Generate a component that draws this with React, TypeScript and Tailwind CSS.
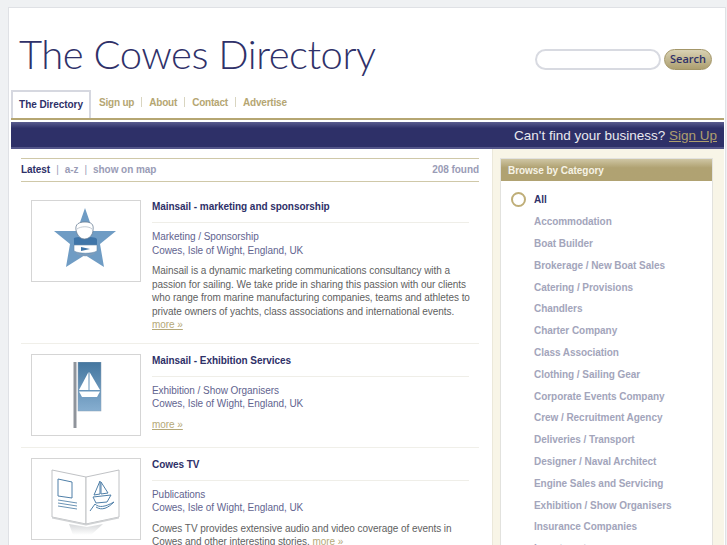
const categories = [
  'Accommodation',
  'Boat Builder',
  'Brokerage / New Boat Sales',
  'Catering / Provisions',
  'Chandlers',
  'Charter Company',
  'Class Association',
  'Clothing / Sailing Gear',
  'Corporate Events Company',
  'Crew / Recruitment Agency',
  'Deliveries / Transport',
  'Designer / Naval Architect',
  'Engine Sales and Servicing',
  'Exhibition / Show Organisers',
  'Insurance Companies',
  'Investment',
]

function StarLogo() {
  return (
    <svg width="62" height="60" viewBox="0 0 62 60" className="mb-[6px] mr-[2px]">
      <path d="M31 0 L39 23 L62 23 L46 36 L50 59 L31 47 L12 59 L16 36 L0 23 L23 23 Z" fill="#6f9cc4" />
      <path d="M20 32 C19 29 22 29 30 29 C39 29 43 29 43 32 L43 37 L20 37 Z" fill="#3f75a8" />
      <path d="M22 22 C21 16 25 14 31 14 C37 14 40 16 39 22 C39 27 35 31 30.500 31 C26 31 23 27 22 22 Z" fill="#fff" stroke="#6a7f95" strokeWidth="0.8" />
      <path d="M23 21 C27 18 35 18 38 21" fill="none" stroke="#b4bcc6" strokeWidth="0.8" />
      <path d="M20 37 L43 37 L43 43 C38 46 25 46 20 43 Z" fill="#fff" stroke="#6a89a8" strokeWidth="0.6" />
      <path d="M27 39 L36 41 L27 43 Z" fill="#3f75a8" />
      <path d="M21 44 C26 47 37 47 42 44 C40 49 24 50 21 44 Z" fill="#7f9dbb" />
    </svg>
  )
}

function FlagLogo() {
  return (
    <svg width="29" height="66" viewBox="0 0 29 66" className="ml-[3px]">
      <defs>
        <linearGradient id="flag" x1="0" y1="0" x2="0" y2="1">
          <stop offset="0" stopColor="#44769f" />
          <stop offset="1" stopColor="#86aed0" />
        </linearGradient>
      </defs>
      <rect x="0.500" y="0" width="3" height="66" fill="#8f949b" />
      <rect x="5" y="0" width="23" height="49" fill="url(#flag)" stroke="#8aa0b4" strokeWidth="0.5" />
      <path d="M15.500 10 L15.500 28 L6 28 Z" fill="#fff" />
      <path d="M16.500 10 L27 28 L16.500 28 Z" fill="#fff" />
      <path d="M6 29.500 L27 29.500 L24 35 L9 35 Z" fill="#fff" />
    </svg>
  )
}

function BrochureLogo() {
  return (
    <svg width="72" height="66" viewBox="0 0 72 66" className="ml-[2px] mt-[6px]">
      <defs>
        <linearGradient id="shade" x1="0" y1="0" x2="0" y2="1">
          <stop offset="0" stopColor="#d6d8da" />
          <stop offset="1" stopColor="#ffffff" />
        </linearGradient>
      </defs>
      <path d="M18 55 L36 58 L52 55 L40 66 L22 66 Z" fill="url(#shade)" />
      <path d="M1 1 L35 8 L35 55 L1 48 Z" fill="#fff" stroke="#c0c2c5" strokeWidth="1" />
      <path d="M35 8 L68 1 L68 48 L35 55 Z" fill="#fff" stroke="#c0c2c5" strokeWidth="1" />
      <path d="M1 48 L35 55 L68 48 L68 49.500 L35 56.500 L1 49.500 Z" fill="#cfd1d3" />
      <path d="M7 10 L21 13 L21 29 L7 27 Z" fill="none" stroke="#4f7fa8" strokeWidth="1" />
      <path d="M7 31 L26 34 M7 34 L26 37 M7 37 L26 40" stroke="#6a93b5" strokeWidth="1" />
      <path d="M49 12 L49 25 L43 26 Z M50 13 L57 24 L50 25 Z M42 28 L60 26 L56 33 L45 34 Z" fill="none" stroke="#4f7fa8" strokeWidth="1" />
      <path d="M39 42 L44 35 C48 39 54 38 63 33 C57 39 51 42 45 38" fill="none" stroke="#4f7fa8" strokeWidth="1" />
    </svg>
  )
}

function Listing({
  logo,
  title,
  category,
  description,
  more,
}: {
  logo: React.ReactNode
  title: string
  category: string
  description?: React.ReactNode
  more?: boolean
}) {
  return (
    <div className="flex border-b border-[#f0efe9] pb-[11px] pl-[10px] pt-[10px]">
      <div className="flex h-[82px] w-[110px] shrink-0 items-center justify-center border border-[#d5d5d5]">{logo}</div>
      <div className="ml-[11px] w-[317px]">
        <h3 className="border-b border-[#efeee8] pb-[9px] text-[10px] font-bold leading-[13px] text-[#2e3068]">{title}</h3>
        <p className="mt-[7px] leading-[13.500px] text-[#62648f]">
          {category}
          <br />
          Cowes, Isle of Wight, England, UK
        </p>
        {description && <p className="-mr-[3px] mt-[7px] leading-[13.500px] text-[#5f5f5f]">{description}</p>}
        {more && (
          <p className="mt-[7px] leading-[13.500px]">
            <a className="text-[#b5a878] underline">more »</a>
          </p>
        )}
      </div>
    </div>
  )
}

export default function App() {
  return (
    <div className="h-[545px] w-[727px] overflow-hidden bg-[#eff1f3] pl-[8px] pt-[7px] text-[10px] tracking-[-0.05px] [font-family:'Liberation_Sans',Arial,sans-serif]">
      <div className="h-[600px] w-[718px] border border-[#dfe1e5] bg-white pl-[2px]">
        {/* Header */}
        <div className="flex h-[82px] items-end justify-between">
          <h1 className="mb-[8px] ml-[8px] text-[40px] font-light leading-[56px] tracking-[-0.5px] text-[#2f3169] [font-family:Lato,sans-serif]">The Cowes Directory</h1>
          <div className="mb-[20px] mr-[13px] flex items-center gap-[3px]">
            <input className="h-[21px] w-[126px] rounded-full border-2 border-[#d8dae1] bg-white" />
            <button className="h-[21px] w-[48px] rounded-full border border-[#a39668] bg-gradient-to-b from-[#d9d2b4] to-[#ad9f70] text-[11px] tracking-normal text-[#2e3068] [font-family:'Open_Sans',sans-serif] font-semibold">Search</button>
          </div>
        </div>

        {/* Nav */}
        <nav className="mr-px flex h-[30px] items-end border-b-[2px] border-[#b5a672]">
          <a className="flex h-[28px] w-[80px] items-center justify-center border-x-2 border-t-2 border-[#d6d8e0] pb-px font-bold text-[#2e3068]">The Directory</a>
          <div className="mb-[5px] ml-[8px] flex h-[22px] items-center font-bold tracking-[-0.2px] text-[#b5a672]">
            <a>Sign up</a>
            <span className="mx-[7px] h-[10px] w-px bg-[#d9d5c0]" />
            <a>About</a>
            <span className="mx-[7px] h-[10px] w-px bg-[#d9d5c0]" />
            <a>Contact</a>
            <span className="mx-[7px] h-[10px] w-px bg-[#d9d5c0]" />
            <a>Advertise</a>
          </div>
        </nav>

        {/* Banner */}
        <div className="mr-px mt-[2px] flex h-[27px] items-center justify-end border-b-2 border-b-[#54568a] bg-gradient-to-b from-[#5a5c8e] from-0% to-[#2e3068] to-25% pr-[7px] pt-[3px] text-[13.500px] tracking-normal text-[#e9e9ef]">
          Can't find your business?&nbsp;<a className="text-[#ae9f6e] underline">Sign Up</a>
        </div>

        <div className="mr-px flex">
          {/* Results */}
          <div className="w-[481px] pl-[10px] pr-[13px] pt-[9px]">
            <div className="mb-[8px] flex h-[24px] items-center justify-between border-y border-[#cfc8a8] pb-[2px] font-bold text-[#9a9cb6]">
              <div className="flex items-center">
                <span className="text-[#2e3068]">Latest</span>
                <span className="mx-[6px] font-normal">|</span>
                <a>a-z</a>
                <span className="mx-[6px] font-normal">|</span>
                <a>show on map</a>
              </div>
              <span>208 found</span>
            </div>
            <Listing
              logo={<StarLogo />}
              title="Mainsail - marketing and sponsorship"
              category="Marketing / Sponsorship"
              description={
                <>
                  Mainsail is a dynamic marketing communications consultancy with a passion for sailing. We take pride in sharing this passion with our clients who range from marine manufacturing companies, teams and athletes to private owners of yachts, class associations and international events.{' '}
                  <a className="text-[#b5a878] underline">more »</a>
                </>
              }
            />
            <Listing logo={<FlagLogo />} title="Mainsail - Exhibition Services" category="Exhibition / Show Organisers" more />
            <Listing
              logo={<BrochureLogo />}
              title="Cowes TV"
              category="Publications"
              description={
                <>
                  Cowes TV provides extensive audio and video coverage of events in Cowes and other interesting stories. <a className="text-[#b5a878] underline">more »</a>
                </>
              }
            />
          </div>

          {/* Sidebar */}
          <aside className="flex-1 border-l border-[#ebe8da] bg-[#f8f5e7] pl-[7px] pr-[11px] pt-[9px]">
            <div className="border-x border-t border-[#e2e2de] bg-white">
              <div className="flex h-[22px] items-center bg-gradient-to-b from-[#cfc6a4] from-0% to-[#b0a272] to-40% pl-[7px] font-bold text-[#f6f3e6]">Browse by Category</div>
              <ul className="pl-[33px] pt-[8px] font-bold text-[#a3a5bb]">
                <li className="relative flex h-[21.800px] items-center text-[#2e3068]">
                  <span className="absolute -left-[23px] top-[3px] h-[15px] w-[15px] rounded-full border-2 border-[#bfae78]" />
                  All
                </li>
                {categories.map((name) => (
                  <li key={name} className="flex h-[21.800px] items-center">{name}</li>
                ))}
              </ul>
            </div>
          </aside>
        </div>
      </div>
    </div>
  )
}
